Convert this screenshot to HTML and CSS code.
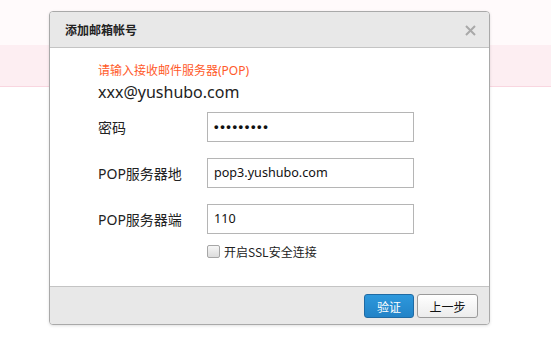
FILE: index.html
```html
<!DOCTYPE html>
<html lang="zh">
<head>
<meta charset="utf-8">
<link rel="stylesheet" href="styles.css">
</head>
<body>
<div class="page">
  <div class="top-strip"></div>
  <div class="band"></div>
</div>
<div class="dialog">
  <div class="dlg-head">
    <span class="dlg-title">添加邮箱帐号</span>
    <span class="dlg-close">
      <svg width="11" height="11" viewBox="0 0 11 11"><path d="M1 1L10 10M10 1L1 10" stroke="#a9a9a9" stroke-width="2"/></svg>
    </span>
  </div>
  <div class="dlg-body">
    <div class="hint">请输入接收邮件服务器(POP)</div>
    <div class="email">xxx@yushubo.com</div>
    <div class="form">
      <div class="row">
        <label class="lbl">密码</label>
        <div class="field pwd">•••••••••</div>
      </div>
      <div class="row">
        <label class="lbl">POP服务器地</label>
        <div class="field">pop3.yushubo.com</div>
      </div>
      <div class="row">
        <label class="lbl">POP服务器端</label>
        <div class="field">110</div>
      </div>
      <div class="check-row">
        <span class="box"></span>
        <span class="check-text">开启SSL安全连接</span>
      </div>
    </div>
  </div>
  <div class="dlg-foot">
    <button class="btn primary">验证</button>
    <button class="btn">上一步</button>
  </div>
</div>
</body>
</html>
```

FILE: styles.css
```css
html, body {
  margin: 0;
  padding: 0;
  background: #fff;
  font-family: "Noto Sans", "Noto Sans CJK SC", sans-serif;
  width: 551px;
  height: 343px;
  overflow: hidden;
}
.page {
  display: flex;
  flex-direction: column;
}
.top-strip {
  height: 45px;
  background: #fffafb;
}
.band {
  height: 41px;
  background: #fdeef2;
  border-bottom: 1px solid #f9d6e0;
}
.dialog {
  position: absolute;
  left: 49px;
  top: 11px;
  width: 439px;
  height: 312px;
  border: 1px solid #a9a9a9;
  border-radius: 4px;
  background: #fff;
  box-shadow: 0 1px 3px rgba(0,0,0,0.12);
  display: flex;
  flex-direction: column;
  overflow: hidden;
}
.dlg-head {
  height: 35px;
  background: #e8e8e8;
  border-bottom: 1px solid #c4c4c4;
  display: flex;
  align-items: center;
  justify-content: space-between;
  padding: 0 13px 0 15px;
}
.dlg-title {
  font-family: "Noto Sans CJK SC", sans-serif;
  font-size: 12px;
  font-weight: bold;
  color: #222;
}
.dlg-close {
  display: flex;
  margin-top: 1px;
}
.dlg-body {
  flex: 1;
  padding: 14px 0 0 48px;
}
.hint {
  font-size: 12px;
  line-height: 18px;
  color: #ff5a2a;
}
.email {
  font-size: 16px;
  line-height: 20px;
  color: #222;
  margin-top: 2px;
}
.form {
  margin-top: 10px;
  display: flex;
  flex-direction: column;
  gap: 16px;
}
.row {
  display: flex;
  align-items: center;
  height: 30px;
}
.lbl {
  width: 109px;
  font-size: 14px;
  color: #222;
}
.field {
  width: 199px;
  height: 28px;
  border: 1px solid #b5b5b5;
  padding-left: 6px;
  font-family: "Noto Sans", "Noto Sans CJK SC", sans-serif;
  font-size: 12.6px;
  line-height: 28px;
  color: #111;
}
.pwd {
  font-family: "Liberation Sans", sans-serif;
  font-size: 13px;
  letter-spacing: 1.6px;
  font-weight: bold;
}
.check-row {
  display: flex;
  align-items: center;
  margin-top: -6px;
  margin-left: 109px;
  height: 14px;
}
.box {
  width: 11px;
  height: 11px;
  border: 1px solid #a6a6a6;
  border-radius: 2px;
  background: linear-gradient(#f6f6f6, #dcdcdc);
  margin-right: 4px;
}
.check-text {
  font-family: "Noto Sans CJK SC", sans-serif;
  font-size: 12px;
  color: #222;
}
.dlg-foot {
  height: 38px;
  background: #e8e8e8;
  border-top: 1px solid #c4c4c4;
  display: flex;
  justify-content: flex-end;
  align-items: flex-start;
  gap: 3px;
  padding: 7px 11px 0 0;
  box-sizing: border-box;
}
.btn {
  height: 24px;
  width: 61px;
  border: 1px solid #9a9a9a;
  border-radius: 3px;
  background: linear-gradient(#ffffff, #ececec);
  font-family: "Noto Sans CJK SC", sans-serif;
  font-size: 12px;
  color: #111;
  padding: 0;
}
.btn.primary {
  width: 50px;
  border-color: #1f6aa3;
  background: linear-gradient(#2d98dc, #2283c7);
  color: #fff;
}
```
